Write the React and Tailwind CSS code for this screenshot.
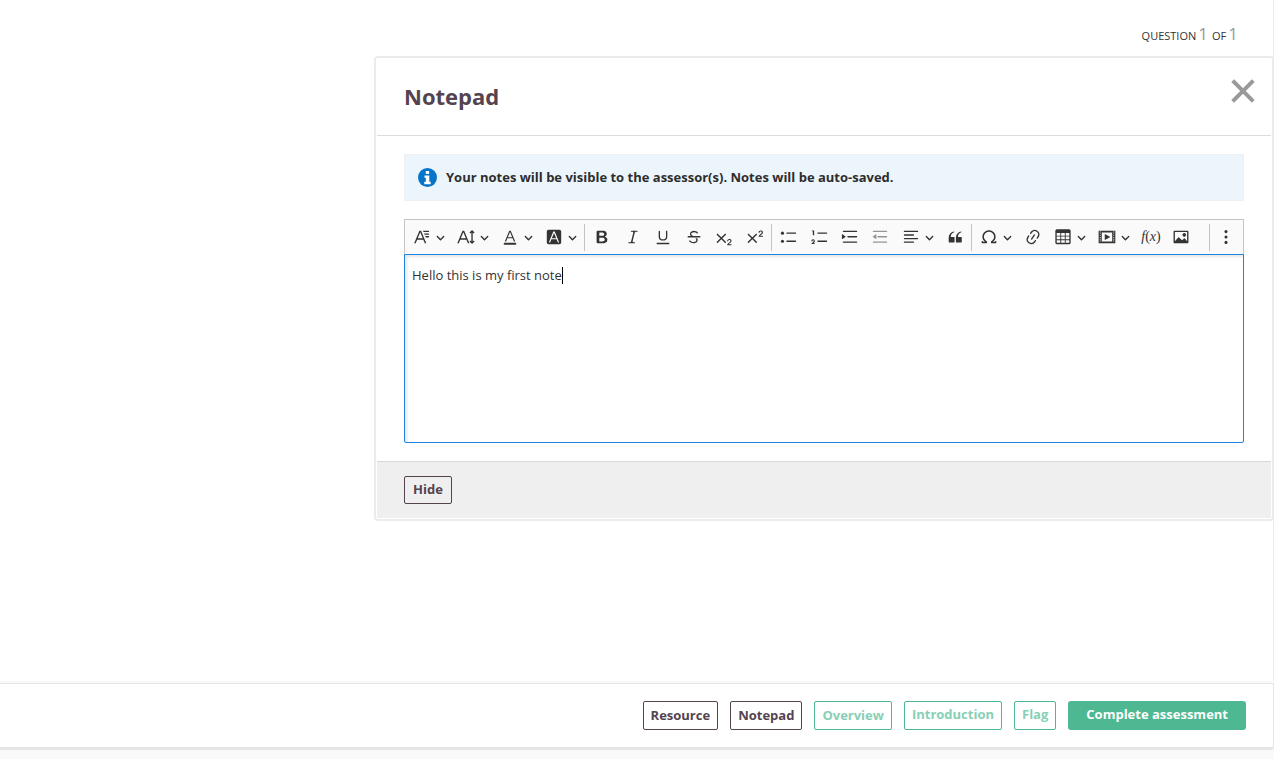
import { useState } from 'react';
import clsx from 'clsx';

const LIST_LINES =
  'M7 5.75c0 .414.336.75.75.75h9.5a.75.75 0 1 0 0-1.5h-9.5a.75.75 0 0 0-.75.75zM7 14.75c0 .414.336.75.75.75h9.5a.75.75 0 1 0 0-1.5h-9.5a.75.75 0 0 0-.75.75z';
const INDENT_LINES =
  'M2 3.75c0 .414.336.75.75.75h14.5a.75.75 0 1 0 0-1.5H2.75a.75.75 0 0 0-.75.75zm5 6c0 .414.336.75.75.75h9.5a.75.75 0 1 0 0-1.5h-9.5a.75.75 0 0 0-.75.75zM2.75 16.5h14.5a.75.75 0 1 0 0-1.5H2.75a.75.75 0 1 0 0 1.5z';
const CROSS =
  'm7.03 10.349 3.818-3.819a.8.8 0 1 1 1.132 1.132L8.16 11.48l3.819 3.818a.8.8 0 1 1-1.132 1.132L7.03 12.61l-3.818 3.82a.8.8 0 1 1-1.132-1.132L5.9 11.48 2.08 7.662A.8.8 0 1 1 3.212 6.53l3.818 3.82z';
const SMALL_TWO =
  'h2.549c.254 0 .447.05.58.152a.49.49 0 0 1 .201.413.54.54 0 0 1-.159.393c-.105.108-.266.162-.48.162h-3.594c-.245 0-.435-.066-.572-.197a.621.621 0 0 1-.205-.463c0-.114.044-.265.132-.453a1.62 1.62 0 0 1 .288-.444c.433-.436.824-.81 1.172-1.122.348-.312.597-.517.747-.615.267-.183.49-.368.667-.553.177-.185.312-.375.405-.57.093-.194.139-.384.139-.57a1.008 1.008 0 0 0-.554-.917 1.197 1.197 0 0 0-.56-.133c-.426 0-.761.182-1.005.546a2.332 2.332 0 0 0-.164.39 1.609 1.609 0 0 1-.258.488c-.096.114-.237.17-.423.17a.558.558 0 0 1-.405-.156.568.568 0 0 1-.161-.427c0-.218.05-.446.151-.683.101-.238.252-.453.452-.646s.454-.349.762-.467a2.998 2.998 0 0 1 1.081-.178c.498 0 .923.076 1.274.228a1.916 1.916 0 0 1 1.004 1.032 1.984 1.984 0 0 1-.156 1.794c-.2.32-.405.572-.613.754-.208.182-.558.468-1.048.857-.49.39-.826.691-1.008.906a2.703 2.703 0 0 0-.24.309z';

const ICONS = {
  fontFamily: (
    <path d="M11.03 3h6.149a.75.75 0 1 1 0 1.5h-5.514L11.03 3zm1.27 3h4.879a.75.75 0 1 1 0 1.5h-4.244L12.3 6zm1.27 3h3.609a.75.75 0 1 1 0 1.5h-2.973L13.57 9zm-2.754 2.5L8.038 4.785 5.261 11.5h5.555zm.62 1.5H4.641l-1.666 4.028H1.312l5.789-14h1.875l5.789 14h-1.663L11.436 13z" />
  ),
  fontSize: (
    <>
      <path d="M9.816 11.5 7.038 4.785 4.261 11.5h5.555zm.62 1.5H3.641l-1.666 4.028H.312l5.789-14h1.875l5.789 14h-1.663L10.436 13z" />
      <path d="M16.7 3.5v13M14.4 5.6l2.3-2.4L19 5.6M14.4 14.4l2.3 2.4 2.3-2.4" fill="none" stroke="currentColor" strokeWidth="1.5" />
    </>
  ),
  fontColor: (
    <path d="M12.4 10.3 10 4.5l-2.4 5.8h4.8zm.5 1.2H7.1L5.7 15H4.2l5-12h1.6l5 12h-1.5l-1.4-3.5zm3.1 7H4a1 1 0 0 1 0-2h12a1 1 0 0 1 0 2z" />
  ),
  fontBackground: (
    <path
      fillRule="evenodd"
      d="M4 2h12a2 2 0 0 1 2 2v12a2 2 0 0 1-2 2H4a2 2 0 0 1-2-2V4a2 2 0 0 1 2-2zm8.38 9.262H7.62L10 5.506l2.38 5.756zm.532 1.285L14.34 16h1.426L10.804 4H9.196L4.234 16H5.66l1.428-3.453h5.824z"
    />
  ),
  bold: (
    <path d="M10.187 17H5.773c-.637 0-1.092-.138-1.364-.415-.273-.277-.409-.718-.409-1.323V4.738c0-.617.14-1.062.419-1.332.279-.27.73-.406 1.354-.406h4.68c.69 0 1.288.041 1.793.124.506.083.96.242 1.36.478.341.197.644.447.906.75a3.262 3.262 0 0 1 .808 2.162c0 1.401-.722 2.426-2.167 3.075C15.05 10.175 16 11.315 16 13.01a3.756 3.756 0 0 1-2.296 3.504 6.1 6.1 0 0 1-1.517.377c-.571.073-1.238.11-2 .11zm-.217-6.217H7v4.087h3.069c1.977 0 2.965-.69 2.965-2.072 0-.707-.256-1.22-.768-1.537-.512-.319-1.277-.478-2.296-.478zM7 5.13v3.619h2.606c.729 0 1.292-.067 1.69-.2a1.6 1.6 0 0 0 .91-.765c.165-.267.247-.566.247-.897 0-.707-.26-1.176-.778-1.409-.519-.232-1.31-.348-2.375-.348H7z" />
  ),
  italic: (
    <path d="m9.586 14.633.021.004c-.036.335.095.655.393.962.082.083.173.15.274.201h1.474a.6.6 0 1 1 0 1.2H5.304a.6.6 0 0 1 0-1.2h1.15c.474-.07.809-.182 1.005-.334.157-.122.291-.32.404-.597l2.416-9.55a1.053 1.053 0 0 0-.281-.823 1.12 1.12 0 0 0-.442-.296H8.15a.6.6 0 0 1 0-1.2h6.443a.6.6 0 1 1 0 1.2h-1.195c-.376.056-.65.155-.823.296-.215.175-.423.439-.623.79l-2.366 9.347z" />
  ),
  underline: (
    <path d="M3 18v-1.5h14V18zM5.2 10V3.6c0-.4.4-.6.8-.6.3 0 .7.2.7.6v6.2c0 2 1.3 2.8 3.2 2.8 1.9 0 3.4-.9 3.4-2.9V3.6c0-.3.4-.5.8-.5.3 0 .7.2.7.5V10c0 2.7-2.2 4-4.9 4-2.6 0-4.7-1.2-4.7-4z" />
  ),
  strikethrough: (
    <path d="M7 16.4c-.8-.4-1.5-.9-2.2-1.5a.6.6 0 0 1-.2-.5l.3-.6h1c1 1.2 2.1 1.7 3.7 1.7 1 0 1.8-.3 2.3-.6.6-.4.6-1.2.6-1.3.2-1.2-.9-2.1-.9-2.1h2.1c.3.7.4 1.2.4 1.7v.8l-.6 1.2c-.6.8-1.1 1-1.6 1.2a6 6 0 0 1-2.4.6c-1 0-1.8-.3-2.5-.6zM6.8 9 6 8.3c-.4-.5-.5-.8-.5-1.6 0-.7.1-1.3.5-1.8.4-.6 1-1 1.6-1.3a6.3 6.3 0 0 1 4.7 0 4 4 0 0 1 1.7 1l.3.7c0 .1.2.4-.2.7-.4.2-.9.1-1 0a3 3 0 0 0-1.2-1c-.4-.2-1-.3-2-.4-.7 0-1.4.2-2 .6-.8.6-1 .8-1 1.5 0 .8.5 1 1.2 1.5.6.4 1.1.7 1.9 1H6.8zM3 10.5V9h14v1.5z" />
  ),
  subscript: <path d={`${CROSS}M15.177 18.178${SMALL_TWO}`} />,
  superscript: <path d={`${CROSS}M15.677 8.678${SMALL_TWO}`} />,
  bulletedList: (
    <>
      <path d={LIST_LINES} />
      <circle cx="2.75" cy="5.75" r="1.75" />
      <circle cx="2.75" cy="14.75" r="1.75" />
    </>
  ),
  numberedList: (
    <path
      d={`${LIST_LINES}M3.5 3v5H2V3.7H1v-1h2.5V3zM.343 17.857l2.59-3.257H2.92a.6.6 0 1 0-1.04 0H.302a2 2 0 1 1 3.995 0h-.001c-.048.405-.16.734-.333.988-.175.254-.59.692-1.244 1.312H4.3v1h-4l.043-.043z`}
    />
  ),
  indent: (
    <path d={`${INDENT_LINES}M1.632 6.95 5.02 9.358a.4.4 0 0 1-.013.661l-3.39 2.207A.4.4 0 0 1 1 11.892V7.275a.4.4 0 0 1 .632-.326z`} />
  ),
  outdent: (
    <path d={`${INDENT_LINES}M5.368 6.95 1.98 9.358a.4.4 0 0 0 .013.661l3.39 2.207A.4.4 0 0 0 6 11.892V7.275a.4.4 0 0 0-.632-.326z`} />
  ),
  alignLeft: (
    <path d="M2.75 3h14.5a.75.75 0 1 1 0 1.5H2.75a.75.75 0 0 1 0-1.5zm0 4h9.93a.75.75 0 1 1 0 1.5H2.75a.75.75 0 0 1 0-1.5zm0 4h14.5a.75.75 0 1 1 0 1.5H2.75a.75.75 0 0 1 0-1.5zm0 4h9.93a.75.75 0 1 1 0 1.5H2.75a.75.75 0 0 1 0-1.5z" />
  ),
  quote: (
    <path d="M3 10.423a6.5 6.5 0 0 1 6.056-6.408l.038.67C6.448 5.423 5.354 7.663 5.22 10H9c.552 0 .5.432.5.986v4.511c0 .554-.448.503-1 .503h-5c-.552 0-.5-.449-.5-1.003v-4.574zm8 0a6.5 6.5 0 0 1 6.056-6.408l.038.67c-2.646.739-3.74 2.979-3.873 5.315H17c.552 0 .5.432.5.986v4.511c0 .554-.448.503-1 .503h-5c-.552 0-.5-.449-.5-1.003v-4.574z" />
  ),
  omega: (
    <path d="M10 2.5a7.47 7.47 0 0 1 4.231 1.31 7.268 7.268 0 0 1 2.703 3.454 7.128 7.128 0 0 1 .199 4.353c-.39 1.436-1.475 2.72-2.633 3.677h2.013c0-.226.092-.443.254-.603a.876.876 0 0 1 1.229 0c.163.16.254.377.254.603v.853c0 .209-.078.41-.22.567a.873.873 0 0 1-.547.28l-.101.006h-4.695a.517.517 0 0 1-.516-.518v-1.265c0-.21.128-.398.317-.489a5.601 5.601 0 0 0 2.492-2.371 5.459 5.459 0 0 0 .552-3.693 5.53 5.53 0 0 0-1.955-3.2A5.71 5.71 0 0 0 10 4.206 5.708 5.708 0 0 0 6.419 5.46 5.527 5.527 0 0 0 4.46 8.663a5.457 5.457 0 0 0 .554 3.695 5.6 5.6 0 0 0 2.497 2.37.55.55 0 0 1 .317.49v1.264a.518.518 0 0 1-.516.518H2.618l-.101-.006a.873.873 0 0 1-.547-.28.845.845 0 0 1-.22-.567v-.853c0-.226.091-.443.254-.603a.876.876 0 0 1 1.229 0c.162.16.254.377.254.603h2.013c-1.158-.957-2.243-2.24-2.633-3.677a7.128 7.128 0 0 1 .2-4.353 7.268 7.268 0 0 1 2.703-3.453A7.47 7.47 0 0 1 10 2.5z" />
  ),
  link: (
    <path d="m11.077 15 .991-1.416a.75.75 0 1 1 1.229.86l-1.148 1.64a.748.748 0 0 1-.217.206 5.251 5.251 0 0 1-8.503-5.955.741.741 0 0 1 .12-.274l1.147-1.639a.75.75 0 1 1 1.228.86L4.933 10.7l.006.003a3.75 3.75 0 0 0 6.132 4.294l.006.004zm5.494-5.335a.748.748 0 0 1-.12.274l-1.147 1.639a.75.75 0 1 1-1.228-.86l.86-1.23a3.75 3.75 0 0 0-6.144-4.301l-.86 1.229a.75.75 0 0 1-1.229-.86l1.148-1.64a.748.748 0 0 1 .217-.206 5.251 5.251 0 0 1 8.503 5.955zm-4.563-2.532a.75.75 0 0 1 .184 1.045l-3.155 4.505a.75.75 0 1 1-1.229-.86l3.155-4.506a.75.75 0 0 1 1.045-.184z" />
  ),
  table: (
    <path d="M3 5.5v3h4v-3H3Zm0 4v3h4v-3H3Zm0 4v3h4v-3H3Zm5 3h4v-3H8v3Zm5 0h4v-3h-4v3Zm4-4v-3h-4v3h4Zm0-4v-3h-4v3h4Zm1.5 8A1.5 1.5 0 0 1 17 18H3a1.5 1.5 0 0 1-1.5-1.5V3c.222-.863 1.068-1.5 2-1.5h13c.932 0 1.778.637 2 1.5v13.5Zm-6.5-4v-3H8v3h4Zm0-4v-3H8v3h4Z" />
  ),
  media: (
    <path d="M18.68 3.03c.6 0 .59-.03.59.55v12.84c0 .59.01.56-.59.56H1.29c-.6 0-.59.03-.59-.56V3.58c0-.58-.01-.55.6-.55h17.38zM15.77 15V5H4.2v10h11.57zM2 4v1h1V4H2zm0 2v1h1V6H2zm0 2v1h1V8H2zm0 2v1h1v-1H2zm0 2v1h1v-1H2zm0 2v1h1v-1H2zM17 4v1h1V4h-1zm0 2v1h1V6h-1zm0 2v1h1V8h-1zm0 2v1h1v-1h-1zm0 2v1h1v-1h-1zm0 2v1h1v-1h-1zM7.5 7.177a.4.4 0 0 1 .593-.351l5.133 2.824a.4.4 0 0 1 0 .7l-5.133 2.824a.4.4 0 0 1-.593-.35V7.176v.001z" />
  ),
  image: (
    <path d="M6.91 10.54c.26-.23.64-.21.88.03l3.36 3.14 2.23-2.06a.64.64 0 0 1 .87 0l2.52 2.97V4.5H3.2v10.12l3.71-4.08zm10.27-7.51c.6 0 1.09.47 1.09 1.05v11.84c0 .59-.49 1.06-1.09 1.06H2.79c-.6 0-1.09-.47-1.09-1.06V4.08c0-.58.49-1.05 1.1-1.05h14.38zm-5.22 5.56a1.96 1.96 0 1 1 3.4-1.96 1.96 1.96 0 0 1-3.4 1.96z" />
  ),
  more: (
    <>
      <circle cx="10" cy="4" r="1.7" />
      <circle cx="10" cy="10" r="1.7" />
      <circle cx="10" cy="16" r="1.7" />
    </>
  ),
};

const TOOLBAR_GROUPS = [
  {
    className: 'w-[176px]',
    items: [
      { icon: 'fontFamily', label: 'Font Family', dropdown: true },
      { icon: 'fontSize', label: 'Font Size', dropdown: true },
      { icon: 'fontColor', label: 'Font Color', dropdown: true },
      { icon: 'fontBackground', label: 'Font Background Color', dropdown: true },
    ],
  },
  {
    className: 'w-[183px]',
    items: [
      { icon: 'bold', label: 'Bold' },
      { icon: 'italic', label: 'Italic' },
      { icon: 'underline', label: 'Underline' },
      { icon: 'strikethrough', label: 'Strikethrough' },
      { icon: 'subscript', label: 'Subscript' },
      { icon: 'superscript', label: 'Superscript' },
    ],
  },
  {
    className: 'w-[196px]',
    items: [
      { icon: 'bulletedList', label: 'Bulleted List' },
      { icon: 'numberedList', label: 'Numbered List' },
      { icon: 'indent', label: 'Increase indent' },
      { icon: 'outdent', label: 'Decrease indent', disabled: true },
      { icon: 'alignLeft', label: 'Text alignment', dropdown: true },
      { icon: 'quote', label: 'Block quote' },
    ],
  },
  {
    className: 'w-[222px]',
    items: [
      { icon: 'omega', label: 'Special characters', dropdown: true },
      { icon: 'link', label: 'Link' },
      { icon: 'table', label: 'Insert table', dropdown: true },
      { icon: 'media', label: 'Insert media', dropdown: true },
      { icon: 'formula', label: 'Insert formula' },
      { icon: 'image', label: 'Insert image' },
    ],
  },
];

function ToolbarButton({ icon, label, dropdown, disabled }) {
  return (
    <button
      type="button"
      aria-label={label}
      disabled={disabled}
      className={clsx(
        'flex h-7 items-center text-[#333333] disabled:opacity-50',
        dropdown ? 'w-11 shrink-0 gap-[5px] pl-1.5' : 'flex-1 justify-center',
      )}
    >
      {icon === 'formula' ? (
        <span className="font-['Liberation_Serif',serif] text-sm leading-none">
          <i>f</i>(<i>x</i>)
        </span>
      ) : (
        <svg viewBox="0 0 20 20" fill="currentColor" className="size-[18px] shrink-0">
          {ICONS[icon]}
        </svg>
      )}
      {dropdown && (
        <svg viewBox="0 0 10 10" fill="currentColor" className="size-[9px] shrink-0">
          <path d="M.941 4.523a.75.75 0 1 1 1.06-1.06l3.006 3.005 3.005-3.005a.75.75 0 1 1 1.06 1.06l-3.549 3.55a.75.75 0 0 1-1.168-.136L.941 4.523z" />
        </svg>
      )}
    </button>
  );
}

function Separator() {
  return <span className="mr-0.5 ml-px h-[27px] w-px shrink-0 bg-[#c4c4c4]" />;
}

function Toolbar() {
  return (
    <div role="toolbar" aria-label="Editor toolbar" className="flex h-[35px] items-center border border-b-0 border-[#c4c4c4] bg-[#fafafa] px-0.5">
      {TOOLBAR_GROUPS.map((group, index) => (
        <div key={group.className} className="flex items-center">
          {index > 0 && <Separator />}
          <div className={clsx('flex items-center', group.className)}>
            {group.items.map((item) => (
              <ToolbarButton key={item.icon} {...item} />
            ))}
          </div>
        </div>
      ))}
      <div className="ml-auto flex w-[33px] items-center pr-0.5">
        <Separator />
        <ToolbarButton icon="more" label="Show more items" />
      </div>
    </div>
  );
}

function NotepadPanel() {
  const [note, setNote] = useState('Hello this is my first note');
  const [typing, setTyping] = useState(false);

  return (
    <section className="ml-[374px] rounded-sm border-2 border-[#ebebeb] bg-white p-px">
      <header className="flex h-[77px] items-start justify-between border-b border-[#dcdcdc] pr-4 pl-[27px]">
        <h1 className="mt-5 text-[22px] leading-[34px] font-bold text-[#554450]">Notepad</h1>
        <button type="button" aria-label="Close" className="mt-5 text-[#999999]">
          <svg viewBox="0 0 24 24" className="size-6" fill="none" stroke="currentColor" strokeWidth="4">
            <path d="M1.7 1.7l20.6 20.6M22.3 1.7L1.7 22.3" />
          </svg>
        </button>
      </header>

      <div className="px-[27px] py-[18px]">
        <div className="flex h-[47px] items-center gap-2 border border-[#edf1f4] bg-[#edf5fc] px-[13px]">
          <svg viewBox="0 0 20 20" className="size-5">
            <circle cx="9.5" cy="9.5" r="9.5" fill="#0575c9" />
            <path d="M7.8 2.9h3.4v3H7.8zM6.5 7.4h4.8v6.4h1.4v2.4H6.3v-2.4h1.5V9.7H6.5z" fill="#fff" />
          </svg>
          <p className="text-[13px] font-bold text-[#2d2d2d]">
            Your notes will be visible to the assessor(s). Notes will be auto-saved.
          </p>
        </div>

        <div className="mt-[18px]">
          <Toolbar />
          <div className="relative">
            <textarea
              aria-label="Notes"
              value={note}
              onChange={(event) => setNote(event.target.value)}
              onFocus={() => setTyping(true)}
              onBlur={() => setTyping(false)}
              className="block h-[189px] w-full resize-none rounded-b-xs border border-[#1f84de] bg-white px-[7px] py-2.5 text-[13px] leading-5 text-[#333333] shadow-[inset_2px_2px_3px_rgba(0,0,0,0.1)] outline-none"
            />
            {!typing && <span className="absolute top-[13px] left-[158px] h-[17px] w-px bg-black" />}
          </div>
        </div>
      </div>

      <footer className="border-t border-[#d9d9d9] bg-[#efefef] px-[27px] py-3.5">
        <button type="button" className="block h-7 rounded-xs border border-[#554450] px-2 text-[13px] font-bold text-[#554450]">
          Hide
        </button>
      </footer>
    </section>
  );
}

const ACTIONS = [
  { label: 'Resource', className: 'border-[#554450] text-[#554450]' },
  { label: 'Notepad', className: 'border-[#554450] text-[#554450]' },
  { label: 'Overview', className: 'border-[#4db892] text-[#87d0b6]' },
  { label: 'Introduction', className: 'border-[#4db892] pb-0.5 text-[#87d0b6]' },
  { label: 'Flag', className: 'border-[#4db892] pb-0.5 text-[#87d0b6]' },
];

export default function App() {
  return (
    <div className="flex min-h-screen flex-col bg-[#f9f9f9] font-['Open_Sans','Noto_Sans',sans-serif]">
      <main className="flex-1 border-r border-[#ebebeb] bg-white">
        <p className="flex h-14 items-baseline justify-end gap-1 pt-[21px] pr-[35px] text-[11px] text-[#333333]">
          <span className="flex items-baseline gap-0.5">
            QUESTION <span className="text-[17px] text-[#999999]">1</span>
          </span>
          <span className="flex items-baseline gap-0.5">
            OF <span className="text-[17px] text-[#999999]">1</span>
          </span>
        </p>
        <div className="-mr-px">
          <NotepadPanel />
        </div>
      </main>

      <div className="mt-0.5 mb-[9px] flex items-center justify-end gap-3 rounded-br-sm border-t border-r border-b-3 border-[#e6e6e6] bg-white py-[17px] pr-[27px]">
        {ACTIONS.map((action) => (
          <button
            key={action.label}
            type="button"
            className={clsx('h-[29px] rounded-xs border px-[7px] text-[13px] font-bold', action.className)}
          >
            {action.label}
          </button>
        ))}
        <button type="button" className="h-[29px] rounded-[3px] bg-[#4db892] px-[18px] pb-0.5 text-[13px] font-bold text-white">
          Complete assessment
        </button>
      </div>
    </div>
  );
}
